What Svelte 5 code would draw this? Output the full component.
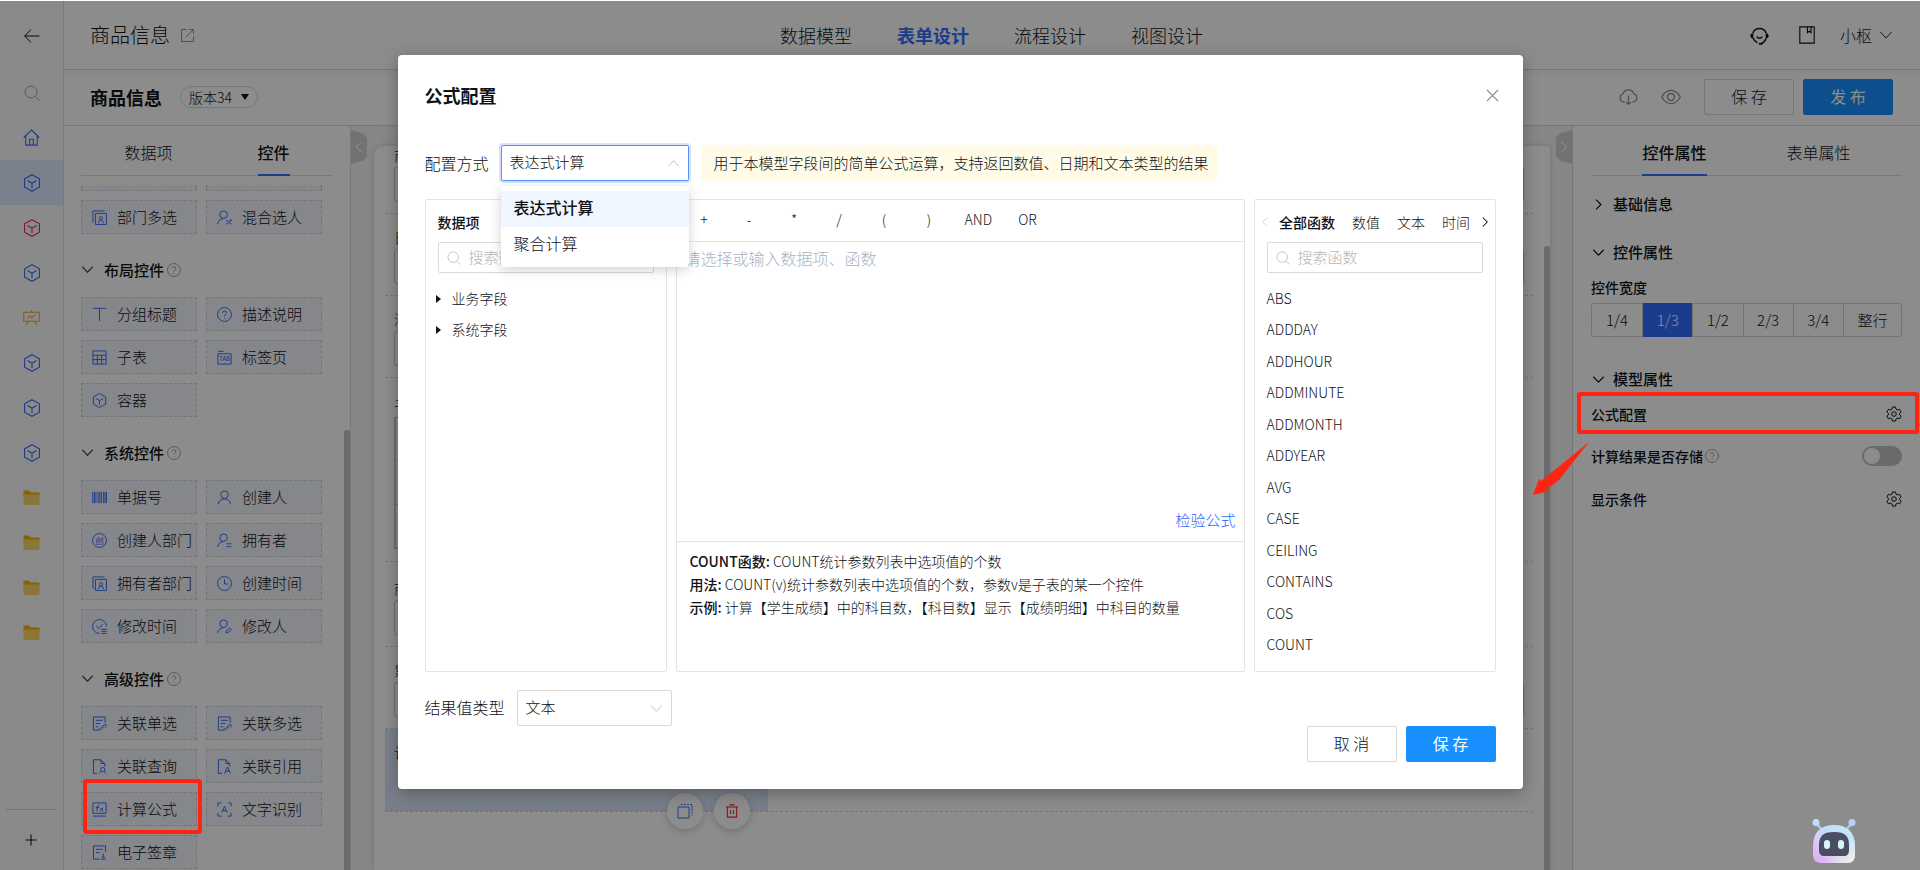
<script>
	const railItems = [
		{ icon: 'home', color: '#3370ff' },
		{ icon: 'cube', color: '#3370ff', active: true },
		{ icon: 'cube', color: '#e8267a' },
		{ icon: 'cube', color: '#3370ff' },
		{ icon: 'board', color: '#f2a534' },
		{ icon: 'cube', color: '#3370ff' },
		{ icon: 'cube', color: '#3370ff' },
		{ icon: 'cube', color: '#3370ff' },
		{ icon: 'folder', color: '#f0b400' },
		{ icon: 'folder', color: '#f0b400' },
		{ icon: 'folder', color: '#f0b400' },
		{ icon: 'folder', color: '#f0b400' }
	];

	const topNav = ['数据模型', '表单设计', '流程设计', '视图设计'];

	const groups = [
		{
			title: '布局控件',
			items: [
				{ label: '分组标题', icon: 'title' },
				{ label: '描述说明', icon: 'help' },
				{ label: '子表', icon: 'table' },
				{ label: '标签页', icon: 'tab' },
				{ label: '容器', icon: 'cube' }
			]
		},
		{
			title: '系统控件',
			items: [
				{ label: '单据号', icon: 'barcode' },
				{ label: '创建人', icon: 'user' },
				{ label: '创建人部门', icon: 'creator' },
				{ label: '拥有者', icon: 'userLines' },
				{ label: '拥有者部门', icon: 'dept' },
				{ label: '创建时间', icon: 'clock' },
				{ label: '修改时间', icon: 'clockEdit' },
				{ label: '修改人', icon: 'userEdit' }
			]
		},
		{
			title: '高级控件',
			items: [
				{ label: '关联单选', icon: 'docLink' },
				{ label: '关联多选', icon: 'docLink' },
				{ label: '关联查询', icon: 'docSearch' },
				{ label: '关联引用', icon: 'docA' },
				{ label: '计算公式', icon: 'formula', marked: true },
				{ label: '文字识别', icon: 'ocr' },
				{ label: '电子签章', icon: 'stamp' }
			]
		}
	];

	const methods = ['表达式计算', '聚合计算'];
	const operators = ['+', '-', '*', '/', '(', ')', 'AND', 'OR'];
	const functionTabs = ['全部函数', '数值', '文本', '时间'];
	const functions = [
		'ABS', 'ADDDAY', 'ADDHOUR', 'ADDMINUTE', 'ADDMONTH', 'ADDYEAR',
		'AVG', 'CASE', 'CEILING', 'CONTAINS', 'COS', 'COUNT'
	];
	const widths = ['1/4', '1/3', '1/2', '2/3', '3/4', '整行'];

	// stroke icons on a 16x16 grid
	const paths = {
		back: 'M15.5 8H.8M7 1.5.7 8 7 14.5',
		search: 'M13 7A6 6 0 1 1 1 7a6 6 0 0 1 12 0ZM11.4 11.4 15.5 15.5',
		home: 'M.7 8 8 1l7.3 7M2.6 6.5v8.7h10.8V6.5M6.2 15V9.6h3.6V15',
		cube: 'M8 .6 14.6 4.2v7.6L8 15.4 1.4 11.8V4.2ZM4 5.8 8 8.2l4-2.4M8 8.2v4.4',
		board: 'M.7 3h14.6v8.6H.7ZM8 1v2M5 11.6 3.2 15M11 11.6l1.8 3.4M4.2 8.8l2.3-2.3 1.8 1.7 3.4-3',
		plus: 'M8 1.6v12.8M1.6 8h12.8',
		external: 'M7 1.6H1.6v12.8h12.8V9M9.8 1.6h4.6v4.6M14.2 1.8 6.2 9.8',
		down: 'M1.6 4.6 8 11.4l6.4-6.8',
		up: 'M1.6 11.4 8 4.6l6.4 6.8',
		left: 'M11 2 5 8l6 6',
		right: 'M5 2l6 6-6 6',
		close: 'M2 2l12 12M14 2 2 14',
		help: 'M15.4 8A7.4 7.4 0 1 1 .6 8a7.4 7.4 0 0 1 14.8 0ZM5.9 6.3a2.1 2.1 0 1 1 3 1.9c-.7.4-.9.8-.9 1.5M8 11.3v1.2',
		title: 'M1 1.4h14M8 1.4V15',
		table: 'M1 1h14v14H1ZM1 5.5h14M1 10.2h14M5.7 5.5V15M10.3 5.5V15',
		tab: 'M1 4h14v11H1ZM1 1.4h6',
		barcode: 'M.8 2v12M2.500 2v12M4.200 2v12M6.500 2v12M8.300 2v12M10 2v12M12.400 2v12M13.900 2v12M15.400 2v12',
		user: 'M12 5a4 4 0 1 1-8 0 4 4 0 0 1 8 0ZM1.4 15.2C2 11.5 4.500 9.600 8 9.600s6 1.900 6.600 5.600',
		userLines: 'M11 5a4 4 0 1 1-8 0 4 4 0 0 1 8 0ZM.6 15c.5-3.400 2.600-5.200 5.600-5.500M10 11.500h5.400M10 14.600h5.400',
		userEdit: 'M11 5a4 4 0 1 1-8 0 4 4 0 0 1 8 0ZM.6 15c.5-3.400 2.600-5.200 5.600-5.500M9.500 14.800l.4-2.200 3.600-3.200 1.700 1.900-3.500 3.100Z',
		userCross: 'M11 5a4 4 0 1 1-8 0 4 4 0 0 1 8 0ZM.6 15c.5-3.400 2.600-5.200 5.600-5.500M9.500 11c3 0 3 4 6 4M9.500 15c3 0 3-4 6-4M14.500 9.800 15.700 11l-1.200 1.200',
		dept: 'M1 13.500V1h12.500M3.600 3.600h11.800v11.800H3.600ZM11.300 8.800a1.800 1.800 0 1 1-3.600 0 1.800 1.800 0 0 1 3.600 0ZM6.600 14c.4-2.200 1.600-3 2.900-3s2.500.8 2.900 3',
		creator: 'M15.400 8A7.400 7.400 0 1 1 .6 8a7.400 7.400 0 0 1 14.800 0Z',
		clock: 'M15.400 8A7.400 7.400 0 1 1 .6 8a7.400 7.400 0 0 1 14.800 0ZM8 3.600V8.500h4',
		clockEdit: 'M15.400 8A7.400 7.400 0 1 0 8 15.400M4.600 7.400 7.400 10l4.200-4.600M10 11h5.600M10 13.200h5.600M10 15.400h5.600',
		docLink: 'M7.500 15H1.500V1h12.500v6M4 4.600h7.500M4 8h5M4 11.400h2.600M10 12.500l3-3.200c1.500-1.200 3.200.4 2 1.900l-1 1.100M12.500 11.500l-2.600 2.700c-1.400 1.300-3-.3-1.900-1.700',
		docSearch: 'M5.500 15.300H1.500V.8h8l4 4V8M9.500.8v4h4M13.800 11.300a2.300 2.300 0 1 1-4.600 0 2.300 2.300 0 0 1 4.600 0ZM9.800 13 7.600 15.500M13 13l1.600 2.400',
		docA: 'M5.500 15.300H1.500V.8h8l4 4V8M9.500.8v4h4M8 15.500l3.200-7 3.200 7M9.200 13h4',
		formula: 'M1 1h14v11H1ZM1 15h14M8 3.600c-1.500-.4-2 .3-2.200 1.700L5.200 9.800M4 5.800h3.400M8.500 6l3.500 4M12 6l-3.500 4',
		ocr: 'M1 4.500V1h3.500M11.500 1H15v3.500M15 11.500V15h-3.500M4.500 15H1v-3.500M5 11.300 8 4.700l3 6.600M6 9.300h4',
		stamp: 'M8 15H1.600V1h12.800v6M4.300 4.600h7.400M4.300 8h4M12 9v4M10 13h4M9.400 15.200h5.200',
		book: 'M1.600.8h12.800v14.400H1.600ZM8.400.8v5L10 4.600l1.600 1.200v-5',
		cloud: 'M4.800 12.600H4A3.500 3.500 0 0 1 3.400 5.800 4.800 4.800 0 0 1 12.600 5.800 3.500 3.500 0 0 1 12 12.600h-.8M8 7.200v7.400M6 12.700l2 2 2-2',
		eye: 'M.6 8C2.400 4.600 5 2.700 8 2.700s5.600 1.900 7.400 5.300C13.600 11.400 11 13.300 8 13.300S2.400 11.400.6 8ZM10.800 8a2.800 2.800 0 1 1-5.600 0 2.800 2.800 0 0 1 5.600 0Z',
		headset: 'M2.400 6a6 6 0 0 1 11.200 0M13.500 10.500c-.7 2-2 3.600-4 4.400M2.600 10.200c.7 1.900 2 3.200 3.600 3.900M5.600 9c1.200 1.800 3.600 1.800 4.800 0',
		gear: 'M6.500 1h3l.5 2.100 1.600.9 2-.7 1.500 2.600L13.600 7.300v1.500l1.500 1.400-1.500 2.600-2-.7-1.600.9-.5 2.100h-3L6 13l-1.600-.9-2 .7L.9 10.200l1.500-1.400V7.300L.9 5.900l1.500-2.600 2 .7L6 3.100ZM10.300 8a2.300 2.300 0 1 1-4.600 0 2.300 2.300 0 0 1 4.600 0Z',
		copy: 'M1 4h11v11H1Z',
		trash: 'M1 3.500h14M5 1h6M2.700 3.500V15h10.600V3.500M6.300 7v4.500M9.700 7v4.500'
	};

	let method = $state('表达式计算');
	let resultType = $state('文本');
	let stored = $state(false);
</script>

{#snippet icon(name, size = 16, stroke = 1)}
	<svg class="icon" width={size} height={size} viewBox="0 0 16 16" aria-hidden="true">
		{#if name === 'folder'}
			<path d="M.5 1.500h5.300l1.300 1.700h8.400v4H.5Z" fill="currentColor" />
			<rect x=".5" y="5.200" width="15" height="9.800" rx="1" fill="#ffd667" />
		{:else}
			<path d={paths[name]} fill="none" stroke="currentColor" stroke-width={stroke} />
		{/if}
		{#if name === 'tab'}
			<text x="8" y="12" font-size="6" font-weight="500" text-anchor="middle" fill="currentColor">TAB</text>
		{:else if name === 'creator'}
			<text x="8" y="11.500" font-size="9" font-weight="400" text-anchor="middle" fill="currentColor">创</text>
		{:else if name === 'headset'}
			<path d="M2.800 6v4.500C1 10.500.3 9.500.3 8.200S1 6 2.800 6ZM13.200 6v4.500c1.800 0 2.500-1 2.500-2.300S15 6 13.200 6ZM7.500 14h3v1.700h-3Z" fill="currentColor" />
		{:else if name === 'copy'}
			<path d="M4 1.500h11V12.500" fill="none" stroke="currentColor" stroke-width="1.200" stroke-dasharray="2 1" />
		{/if}
	</svg>
{/snippet}

<div class="page">
	<nav class="rail" aria-label="应用">
		<button class="back" aria-label="返回">{@render icon('back')}</button>
		<button class="rail-btn muted" aria-label="搜索">{@render icon('search')}</button>
		{#each railItems as item}
			<button class="rail-btn" class:active={item.active} style:color={item.color} aria-label={item.icon}>
				{@render icon(item.icon, item.icon === 'cube' ? 18 : 17)}
			</button>
		{/each}
		<button class="rail-add" aria-label="新增">{@render icon('plus', 14, 1.2)}</button>
	</nav>

	<div class="main">
		<header class="topbar">
			<div class="app-name">商品信息 <span class="grey">{@render icon('external', 15)}</span></div>
			<nav class="top-nav">
				{#each topNav as item, i}
					<a href="#top" class:active={i === 1}>{item}</a>
				{/each}
			</nav>
			<div class="account">
				<button aria-label="客服">{@render icon('headset', 19, 1.2)}</button>
				<button aria-label="文档">{@render icon('book', 18)}</button>
				<button class="user">小枢 {@render icon('down', 14)}</button>
			</div>
		</header>

		<div class="subbar">
			<h1>商品信息</h1>
			<button class="version">版本34 <i class="caret"></i></button>
			<div class="sub-actions">
				<button class="grey" aria-label="下载">{@render icon('cloud', 19)}</button>
				<button class="grey" aria-label="预览">{@render icon('eye', 20)}</button>
				<button class="btn">保 存</button>
				<button class="btn primary">发 布</button>
			</div>
		</div>

		<div class="body">
			<aside class="left">
				<div class="tabs wide" role="tablist">
					<button role="tab" aria-selected="false">数据项</button>
					<button role="tab" aria-selected="true" class="on">控件</button>
				</div>
				<div class="palette">
					<div class="cells">
						<div class="cell cut"></div>
						<div class="cell cut"></div>
						<button class="cell">{@render icon('dept', 15)}<span>部门多选</span></button>
						<button class="cell">{@render icon('userCross', 15)}<span>混合选人</span></button>
					</div>
					{#each groups as group}
						<h2>{@render icon('down', 13, 1.6)}<span>{group.title}</span><em>{@render icon('help', 14)}</em></h2>
						<div class="cells">
							{#each group.items as item}
								<button class="cell">
									{@render icon(item.icon, 15)}<span>{item.label}</span>
									{#if item.marked}<i class="mark"></i>{/if}
								</button>
							{/each}
						</div>
					{/each}
				</div>
				<i class="scroll left-scroll"></i>
			</aside>

			<section class="stage">
				<button class="fold fold-left" aria-label="收起左栏">{@render icon('left', 14, 1.2)}</button>
				<div class="form">
					<div class="field first"><label for="f1">商品</label><input id="f1" disabled /></div>
					<div class="field"><label for="f2">日期</label><input id="f2" disabled /></div>
					<div class="field part"><label for="f3">添加</label><input id="f3" disabled /></div>
					<div class="field part"><span>子表</span><div class="subtable"><i></i><i></i><i></i></div></div>
					<div class="field part tall"><label for="f4">商品</label><input id="f4" disabled /></div>
					<div class="field"><label for="f5">累计</label><input id="f5" disabled /></div>
					<div class="field-row">
						<div class="field selected">
							<label for="f6">计算</label><input id="f6" disabled />
							<div class="float-actions">
								<button class="copy" aria-label="复制">{@render icon('copy')}</button>
								<button class="trash" aria-label="删除">{@render icon('trash', 14, 1.2)}</button>
							</div>
						</div>
					</div>
				</div>
				<i class="scroll stage-scroll"></i>
				<button class="fold fold-right" aria-label="收起右栏">{@render icon('right', 14, 1.2)}</button>
			</section>

			<aside class="right">
				<div class="tabs" role="tablist">
					<button role="tab" aria-selected="true" class="on">控件属性</button>
					<button role="tab" aria-selected="false">表单属性</button>
				</div>
				<h3>{@render icon('right', 13, 1.4)}基础信息</h3>
				<h3>{@render icon('down', 13, 1.4)}控件属性</h3>
				<div class="prop-label">控件宽度</div>
				<div class="segments">
					{#each widths as w, i}
						<button class:on={i === 1}>{w}</button>
					{/each}
				</div>
				<h3 class="model">{@render icon('down', 13, 1.4)}模型属性</h3>
				<div class="prop">
					<span>公式配置</span>
					<button aria-label="公式配置">{@render icon('gear')}</button>
					<i class="mark"></i>
					<svg class="arrow" width="58" height="56" viewBox="0 0 58 56" aria-hidden="true">
						<path d="M57 1 12 42 7 38 1 54l16-4-5-4 7-3Z" fill="#ff2412" />
						<path d="M57 1 8 41l7 7 12-9Z" fill="#ff2412" />
					</svg>
				</div>
				<div class="prop">
					<label for="stored">计算结果是否存储</label><em>{@render icon('help', 14)}</em>
					<input id="stored" class="switch" type="checkbox" role="switch" bind:checked={stored} />
				</div>
				<div class="prop">
					<span>显示条件</span>
					<button aria-label="显示条件">{@render icon('gear')}</button>
				</div>
			</aside>
		</div>
	</div>

	<div class="mask">
		<div class="modal" role="dialog" aria-modal="true" aria-labelledby="modal-title">
			<div class="modal-head">
				<h2 id="modal-title">公式配置</h2>
				<button aria-label="关闭">{@render icon('close', 15, 1.4)}</button>
			</div>

			<div class="config">
				<label for="method">配置方式</label>
				<div class="select open">
					<select id="method" bind:value={method}>
						{#each methods as m}<option>{m}</option>{/each}
					</select>
					{@render icon('up', 13)}
					<ul class="dropdown" role="listbox" aria-label="配置方式">
						{#each methods as m}
							<li role="option" aria-selected={m === method} class:on={m === method}>{m}</li>
						{/each}
					</ul>
				</div>
				<p class="tip">用于本模型字段间的简单公式运算，支持返回数值、日期和文本类型的结果</p>
			</div>

			<div class="panes">
				<div class="pane">
					<div class="pane-title"><b>数据项</b></div>
					<div class="search">{@render icon('search', 14)}<input aria-label="搜索数据项" placeholder="搜索数据项" /></div>
					<ul class="tree">
						<li><i></i>业务字段</li>
						<li><i></i>系统字段</li>
					</ul>
				</div>

				<div class="pane editor">
					<div class="operators">
						{#each operators as op}<button>{op}</button>{/each}
					</div>
					<div class="expression">
						<textarea aria-label="公式" placeholder="请选择或输入数据项、函数"></textarea>
						<a href="#check">检验公式</a>
					</div>
					<div class="doc">
						<p><b>COUNT函数:</b> COUNT统计参数列表中选项值的个数</p>
						<p><b>用法:</b> COUNT(v)统计参数列表中选项值的个数，参数v是子表的某一个控件</p>
						<p><b>示例:</b> 计算【学生成绩】中的科目数，【科目数】显示【成绩明细】中科目的数量</p>
					</div>
				</div>

				<div class="pane">
					<div class="pane-title fn-tabs">
						<button class="pale" aria-label="向左">{@render icon('left', 12)}</button>
						<div class="fn-list">
							{#each functionTabs as t, i}<button class:on={i === 0}>{t}</button>{/each}
						</div>
						<button aria-label="向右">{@render icon('right', 12, 1.4)}</button>
					</div>
					<div class="search">{@render icon('search', 14)}<input aria-label="搜索函数" placeholder="搜索函数" /></div>
					<ul class="functions">
						{#each functions as fn}<li>{fn}</li>{/each}
					</ul>
				</div>
			</div>

			<div class="result">
				<label for="result">结果值类型</label>
				<div class="select">
					<select id="result" bind:value={resultType}>
						<option>文本</option>
						<option>数值</option>
						<option>日期</option>
					</select>
					{@render icon('down', 13)}
				</div>
				<div class="modal-actions">
					<button class="btn">取 消</button>
					<button class="btn primary">保 存</button>
				</div>
			</div>
		</div>
	</div>

	<svg class="robot" width="48" height="48" viewBox="0 0 48 48" aria-label="智能助手">
		<defs>
			<linearGradient id="shell" x1="0" y1="1" x2="1" y2="0">
				<stop offset="0" stop-color="#e6a6f2" />
				<stop offset=".35" stop-color="#d5cdf7" />
				<stop offset=".65" stop-color="#bfe0fa" />
				<stop offset="1" stop-color="#c5ecf2" />
			</linearGradient>
			<linearGradient id="glow" x1="0" y1="0" x2="1" y2="1">
				<stop offset=".6" stop-color="#f4f4e6" stop-opacity="0" />
				<stop offset="1" stop-color="#f6f5e2" />
			</linearGradient>
		</defs>
		<path d="M7 6l5 6M41 6l-5 6" stroke="#a9c8f2" stroke-width="2.500" />
		<circle cx="6" cy="4.500" r="3.500" fill="#c3dcfa" />
		<circle cx="42" cy="4.500" r="3.500" fill="#b4d3f8" />
		<path d="M3 28C3 14 11 7 24 7s21 7 21 21v9c0 5-3 8-8 8H11c-5 0-8-3-8-8Z" fill="url(#shell)" />
		<path d="M3 28C3 14 11 7 24 7s21 7 21 21v9c0 5-3 8-8 8H11c-5 0-8-3-8-8Z" fill="url(#glow)" />
		<path d="M9 27c0-9 4-13 15-13s15 4 15 13v5c0 4-2 6-5 6H14c-3 0-5-2-5-6Z" fill="#4b4d63" />
		<rect x="14" y="22" width="6" height="9" rx="3" fill="#d9f3f3" />
		<rect x="28" y="22" width="6" height="9" rx="3" fill="#d9f3f3" />
	</svg>
</div>

<style>
	:global(body) {
		margin: 0;
		background: #fff;
		overflow: hidden;
	}

	.page {
		position: relative;
		display: flex;
		box-sizing: border-box;
		height: 100vh;
		padding-top: 1px;
		color: #0f1216;
		font-family: 'Noto Sans CJK SC', 'Noto Sans', sans-serif;
		font-size: 15px;
		font-weight: 300;
		line-height: 20px;
	}

	.page *,
	.page *::before {
		box-sizing: border-box;
	}

	button,
	input,
	select,
	textarea {
		margin: 0;
		padding: 0;
		border: 0;
		background: none;
		color: inherit;
		font: inherit;
	}

	h1, h2, h3, p, ul {
		margin: 0;
		padding: 0;
		list-style: none;
	}

	em { font-style: normal; }
	a { color: inherit; text-decoration: none; }

	.icon {
		display: block;
		flex: none;
	}

	.grey { color: #8c8c8c; }

	/* left icon rail */
	.rail {
		display: flex;
		flex-direction: column;
		width: 64px;
		border-right: 1px solid #dcdcdc;
		background: #fbfbfb;
	}

	.rail button {
		display: flex;
		align-items: center;
		justify-content: center;
	}

	.back { height: 69px; }
	.rail-btn { height: 45px; }
	.rail-btn.muted { color: #a6a6a6; }
	.rail-btn.active { background: #dfe9ff; }

	.rail .rail-add {
		height: 61px;
		margin: auto 8px 0 6px;
		border-top: 1px solid #d0d0d0;
	}

	.main {
		display: flex;
		flex: 1;
		flex-direction: column;
		min-width: 0;
	}

	.topbar {
		display: grid;
		grid-template-columns: 1fr auto 1fr;
		align-items: center;
		height: 69px;
		padding: 0 27px 0 26px;
		border-bottom: 1px solid #d8d8d8;
	}

	.app-name {
		display: flex;
		align-items: center;
		gap: 10px;
		font-size: 20px;
	}

	.top-nav {
		display: flex;
		gap: 45px;
		font-size: 18px;
	}

	.top-nav .active {
		color: #3370ff;
		font-weight: 700;
	}

	.account {
		display: flex;
		align-items: center;
		justify-content: flex-end;
		gap: 24px;
	}

	.account button:first-child { margin-right: 5px; }

	.user {
		display: flex;
		align-items: center;
		gap: 7px;
		font-size: 16px;
	}

	.subbar {
		display: flex;
		align-items: center;
		height: 56px;
		padding: 0 27px 2px 26px;
		border-bottom: 1px solid #d8d8d8;
		background: linear-gradient(#f8f8f8, #fff 8px);
	}

	.subbar h1 {
		font-size: 18px;
		font-weight: 700;
	}

	.version {
		display: flex;
		align-items: center;
		gap: 9px;
		height: 22px;
		margin-left: 18px;
		padding: 0 8px;
		border: 1px solid #d9d9d9;
		border-radius: 11px;
		font-size: 14px;
	}

	.caret {
		border: 4px solid transparent;
		border-top: 6px solid #0f1216;
		border-bottom: 0;
	}

	.sub-actions {
		display: flex;
		align-items: center;
		margin-left: auto;
	}

	.sub-actions .grey { margin-right: 23px; }
	.sub-actions .btn + .btn { margin-left: 9px; }

	.btn {
		width: 90px;
		height: 36px;
		padding-bottom: 2px;
		border: 1px solid #d9d9d9;
		border-radius: 2px;
		font-size: 16px;
	}

	.btn.primary {
		border-color: #1890ff;
		background: #1890ff;
		color: #fff;
		font-weight: 400;
	}

	.body {
		display: flex;
		flex: 1;
		min-height: 0;
	}

	/* shared tabs */
	.tabs {
		display: flex;
		justify-content: center;
		gap: 80px;
		height: 50px;
		margin: 0 18px;
		border-bottom: 1px solid #dcdcdc;
		font-size: 16px;
	}

	.tabs.wide { gap: 85px; }

	.tabs button {
		height: 50px;
		padding-top: 3px;
		border-bottom: 2px solid transparent;
	}

	.tabs .on {
		border-color: #3370ff;
		font-weight: 500;
	}

	/* widget palette */
	.left {
		position: relative;
		display: flex;
		flex-direction: column;
		width: 287px;
		border-right: 1px solid #dcdcdc;
	}

	.left .tabs { margin: 0 17px; }

	.palette {
		display: flex;
		flex: 1;
		flex-direction: column;
		justify-content: flex-end;
		min-height: 0;
		margin-top: 9px;
		padding: 0 28px 1px 17px;
	}

	.cells {
		display: grid;
		flex: none;
		grid-template-columns: 1fr 1fr;
		gap: 9px;
	}

	.cell {
		position: relative;
		display: flex;
		align-items: center;
		gap: 10px;
		height: 34px;
		padding: 0 0 0 10px;
		border: 1px dashed #cdd4e0;
		background: #f3f6fe;
		white-space: nowrap;
	}

	.cell .icon { color: #2b66fa; }

	.cell.cut {
		height: 6px;
		border-top: 0;
	}

	.palette h2 {
		display: flex;
		flex: none;
		align-items: center;
		height: 63px;
		padding-top: 8px;
		font-size: 15px;
		font-weight: 500;
	}

	.palette h2 span { margin: 0 3px 0 10px; }
	.palette h2 .icon { color: #4e5359; }
	.palette h2 em .icon, .prop em { color: #999; }

	.scroll {
		position: absolute;
		bottom: 0;
		width: 6px;
		border-radius: 3px 3px 0 0;
		background: #c1c4c4;
	}

	.left-scroll {
		top: 304px;
		right: 0;
	}

	.mark {
		position: absolute;
		z-index: 20;
		border: 4px solid #ff2412;
		border-radius: 3px;
	}

	.cell .mark { inset: -14px -6px -9px 1px; }

	/* form stage */
	.stage {
		position: relative;
		flex: 1;
		min-width: 0;
		padding: 20px 22px 0 23px;
		background: #f4f4f5;
	}

	.fold {
		position: absolute;
		top: 4px;
		display: flex;
		align-items: center;
		justify-content: center;
		width: 16px;
		height: 34px;
		background: #d0d0d0;
		color: #fff;
	}

	.fold-left {
		left: 0;
		clip-path: polygon(0 0, 75% 10%, 100% 22%, 100% 78%, 75% 90%, 0 100%);
	}

	.fold-right {
		right: 0;
		clip-path: polygon(100% 0, 25% 10%, 0 22%, 0 78%, 25% 90%, 100% 100%);
	}

	.form {
		height: 100%;
		padding: 0 17px 0 11px;
		border-radius: 10px 0 0 0;
		background: #fff;
		box-shadow: 0 0 5px rgba(0, 0, 0, 0.16);
		overflow: hidden;
	}

	.field {
		height: 82px;
		padding: 14px 9px 0;
		border-bottom: 1px dashed #d6d6d6;
		font-size: 14px;
		line-height: 18px;
	}

	.field label,
	.field span {
		display: block;
		height: 21px;
	}

	.field input {
		display: block;
		width: 100%;
		height: 35px;
		border: 1px solid #c9c9c9;
		border-radius: 3px;
	}

	.field.first { margin-top: -14px; }
	.field.part input, .subtable { width: 66%; }
	.field.tall { height: 85px; padding-top: 17px; }
	.field:has(.subtable) { height: 184px; padding-top: 18px; }

	.subtable {
		display: flex;
		flex-direction: column;
		height: 132px;
		border: 1px solid #c9c9c9;
		border-left-width: 2px;
	}

	.subtable i {
		flex: 1;
		border-bottom: 1px solid #c9c9c9;
	}

	.field-row {
		display: grid;
		grid-template-columns: repeat(3, 1fr);
		border-bottom: 1px dashed #d6d6d6;
	}

	.field.selected {
		position: relative;
		background: #dbe8ff;
	}

	.field.selected input {
		border-color: #e3ecfc;
		background: #e3ecfc;
	}

	.float-actions {
		position: absolute;
		right: 18px;
		bottom: -19px;
		display: flex;
		gap: 11px;
	}

	.float-actions button {
		display: flex;
		align-items: center;
		justify-content: center;
		width: 36px;
		height: 36px;
		border-radius: 50%;
		background: #fff;
		box-shadow: 0 2px 8px rgba(0, 0, 0, 0.2);
	}

	.copy { color: #3370ff; }
	.trash { color: #f5222d; }

	.stage-scroll {
		top: 120px;
		right: 22px;
	}

	/* property panel */
	.right {
		width: 348px;
		padding-bottom: 20px;
		border-left: 1px solid #d8d8d8;
	}

	.right h3 {
		display: flex;
		align-items: center;
		gap: 8px;
		height: 48px;
		padding-left: 19px;
		font-size: 15px;
		font-weight: 500;
	}

	.right .tabs + h3 { margin-top: 4px; }

	.prop-label {
		padding: 1px 18px 6px;
		font-size: 14px;
		font-weight: 500;
	}

	.segments {
		display: flex;
		height: 34px;
		margin: 0 18px;
		border: 1px solid #d2d2d2;
		border-radius: 3px;
	}

	.segments button {
		flex: 1 1 50px;
		border-left: 1px solid #d2d2d2;
	}

	.segments button:first-child { border-left: 0; }
	.segments button:last-child { flex-basis: 58px; }

	.segments .on {
		margin: -1px 0;
		background: #2f6fff;
		color: #fff;
	}

	.right .model {
		height: 44px;
		margin-top: 20px;
	}

	.prop {
		position: relative;
		display: flex;
		align-items: center;
		justify-content: space-between;
		height: 43px;
		padding: 0 18px;
		font-size: 14px;
		font-weight: 500;
	}

	.prop:has(.arrow) {
		height: 22px;
		margin-top: 2px;
		margin-bottom: 9px;
	}

	.prop em {
		flex: 1;
		margin-left: 2px;
	}

	.prop .mark { inset: -11px 1px -9px 4px; }

	.arrow {
		position: absolute;
		z-index: 20;
		top: 38px;
		left: -41px;
	}

	.switch {
		display: flex;
		align-items: center;
		width: 40px;
		height: 20px;
		border-radius: 10px;
		background: #bfc2c2;
		appearance: none;
	}

	.switch::before {
		width: 16px;
		height: 16px;
		margin-left: 2px;
		border-radius: 50%;
		background: #fff;
		content: '';
	}

	.switch:checked { background: #3370ff; }
	.switch:checked::before { margin-left: 22px; }

	/* modal */
	.mask {
		position: absolute;
		z-index: 10;
		inset: 1px 0 0;
		display: flex;
		align-items: flex-start;
		justify-content: center;
		padding-top: 54px;
		background: rgba(0, 0, 0, 0.45);
	}

	.modal {
		width: 1125px;
		max-width: 100%;
		padding: 27px;
		border-radius: 4px;
		background: #fff;
		box-shadow: 0 4px 16px rgba(0, 0, 0, 0.3);
	}

	.modal-head {
		display: flex;
		align-items: center;
		justify-content: space-between;
		height: 26px;
		margin-bottom: 37px;
	}

	.modal-head button {
		margin-right: -4px;
		color: #8c8c8c;
	}

	.modal-head h2 {
		font-size: 18px;
		font-weight: 700;
	}

	.config {
		display: flex;
		align-items: center;
		gap: 12px;
		margin-bottom: 18px;
		font-size: 16px;
	}

	.select {
		position: relative;
		display: flex;
		align-items: center;
		width: 155px;
		height: 36px;
		border: 1px solid #d9d9d9;
		border-radius: 2px;
		font-size: 15px;
	}

	.select.open {
		width: 188px;
		border-color: #5590ff;
		box-shadow: 0 0 0 2px rgba(51, 112, 255, 0.2);
	}

	.select select {
		width: 100%;
		height: 34px;
		padding: 0 30px 2px 8px;
		appearance: none;
		outline: 0;
	}

	.select > .icon {
		position: absolute;
		right: 8px;
		color: #b0b0b0;
		pointer-events: none;
	}

	.dropdown {
		position: absolute;
		z-index: 2;
		top: 40px;
		right: -1px;
		left: -1px;
		padding: 5px 0 4px;
		border-radius: 4px;
		background: #fff;
		box-shadow: 0 3px 12px rgba(0, 0, 0, 0.18);
		font-size: 16px;
	}

	.dropdown li {
		height: 36px;
		padding: 0 13px;
		line-height: 33px;
	}

	.dropdown .on {
		background: #f0f6ff;
		font-weight: 500;
	}

	.tip {
		height: 36px;
		padding: 0 8px 0 13px;
		border-radius: 2px;
		background: #fffbe6;
		font-size: 15px;
		line-height: 35px;
	}

	.panes {
		display: grid;
		grid-template-columns: 242px 1fr 242px;
		gap: 9px;
		height: 473px;
		margin-bottom: 18px;
	}

	.pane {
		display: flex;
		flex-direction: column;
		border: 1px solid #e4e4e4;
		border-radius: 2px;
		font-size: 14px;
	}

	.pane-title {
		display: flex;
		align-items: center;
		height: 42px;
		padding: 1px 12px 0;
	}

	b { font-weight: 500; }

	.fn-tabs {
		justify-content: space-between;
		padding: 1px 4px 0;
	}

	.fn-list {
		display: flex;
		gap: 17px;
	}

	.fn-tabs .on { font-weight: 500; }
	.pale { color: #c4c4c4; }

	.search {
		display: flex;
		align-items: center;
		gap: 8px;
		height: 31px;
		margin: 0 12px;
		padding: 0 8px;
		border: 1px solid #d9d9d9;
		border-radius: 2px;
		color: #bfbfbf;
		font-size: 15px;
	}

	.search input {
		flex: 1;
		min-width: 0;
		padding-bottom: 2px;
		outline: 0;
		color: #0f1216;
	}

	.search input::placeholder { color: #b5b5b5; opacity: 1; }

	.tree {
		padding: 10px;
		line-height: 31px;
	}

	.tree li {
		display: flex;
		align-items: center;
		gap: 11px;
	}

	.tree i {
		border: 4px solid transparent;
		border-right: 0;
		border-left: 5px solid #0f1216;
	}

	.functions {
		display: flex;
		flex: 1;
		flex-direction: column;
		padding: 9px 12px 11px;
	}

	.functions li {
		display: flex;
		flex: 1;
		align-items: center;
	}

	.operators {
		display: flex;
		height: 42px;
		padding: 0 5px 3px;
		border-bottom: 1px solid #e4e4e4;
	}

	.operators button {
		min-width: 45px;
		padding: 0 13px;
	}

	.expression {
		display: flex;
		flex: 1;
		flex-direction: column;
		padding: 6px 8px 11px;
	}

	textarea {
		flex: 1;
		resize: none;
		outline: 0;
		font-size: 16px;
	}

	textarea::placeholder { color: #a9b2c4; opacity: 1; }

	.expression a {
		align-self: flex-end;
		color: #2b66fa;
		font-size: 15px;
	}

	.doc {
		height: 130px;
		padding: 8px 13px;
		border-top: 1px solid #e4e4e4;
		line-height: 23px;
	}

	.result {
		display: flex;
		gap: 12px;
		font-size: 16px;
	}

	.result label { line-height: 35px; }

	.modal-actions {
		display: flex;
		gap: 9px;
		margin: 36px 0 0 auto;
	}

	.robot {
		position: absolute;
		z-index: 20;
		right: 62px;
		bottom: 4px;
	}
</style>
